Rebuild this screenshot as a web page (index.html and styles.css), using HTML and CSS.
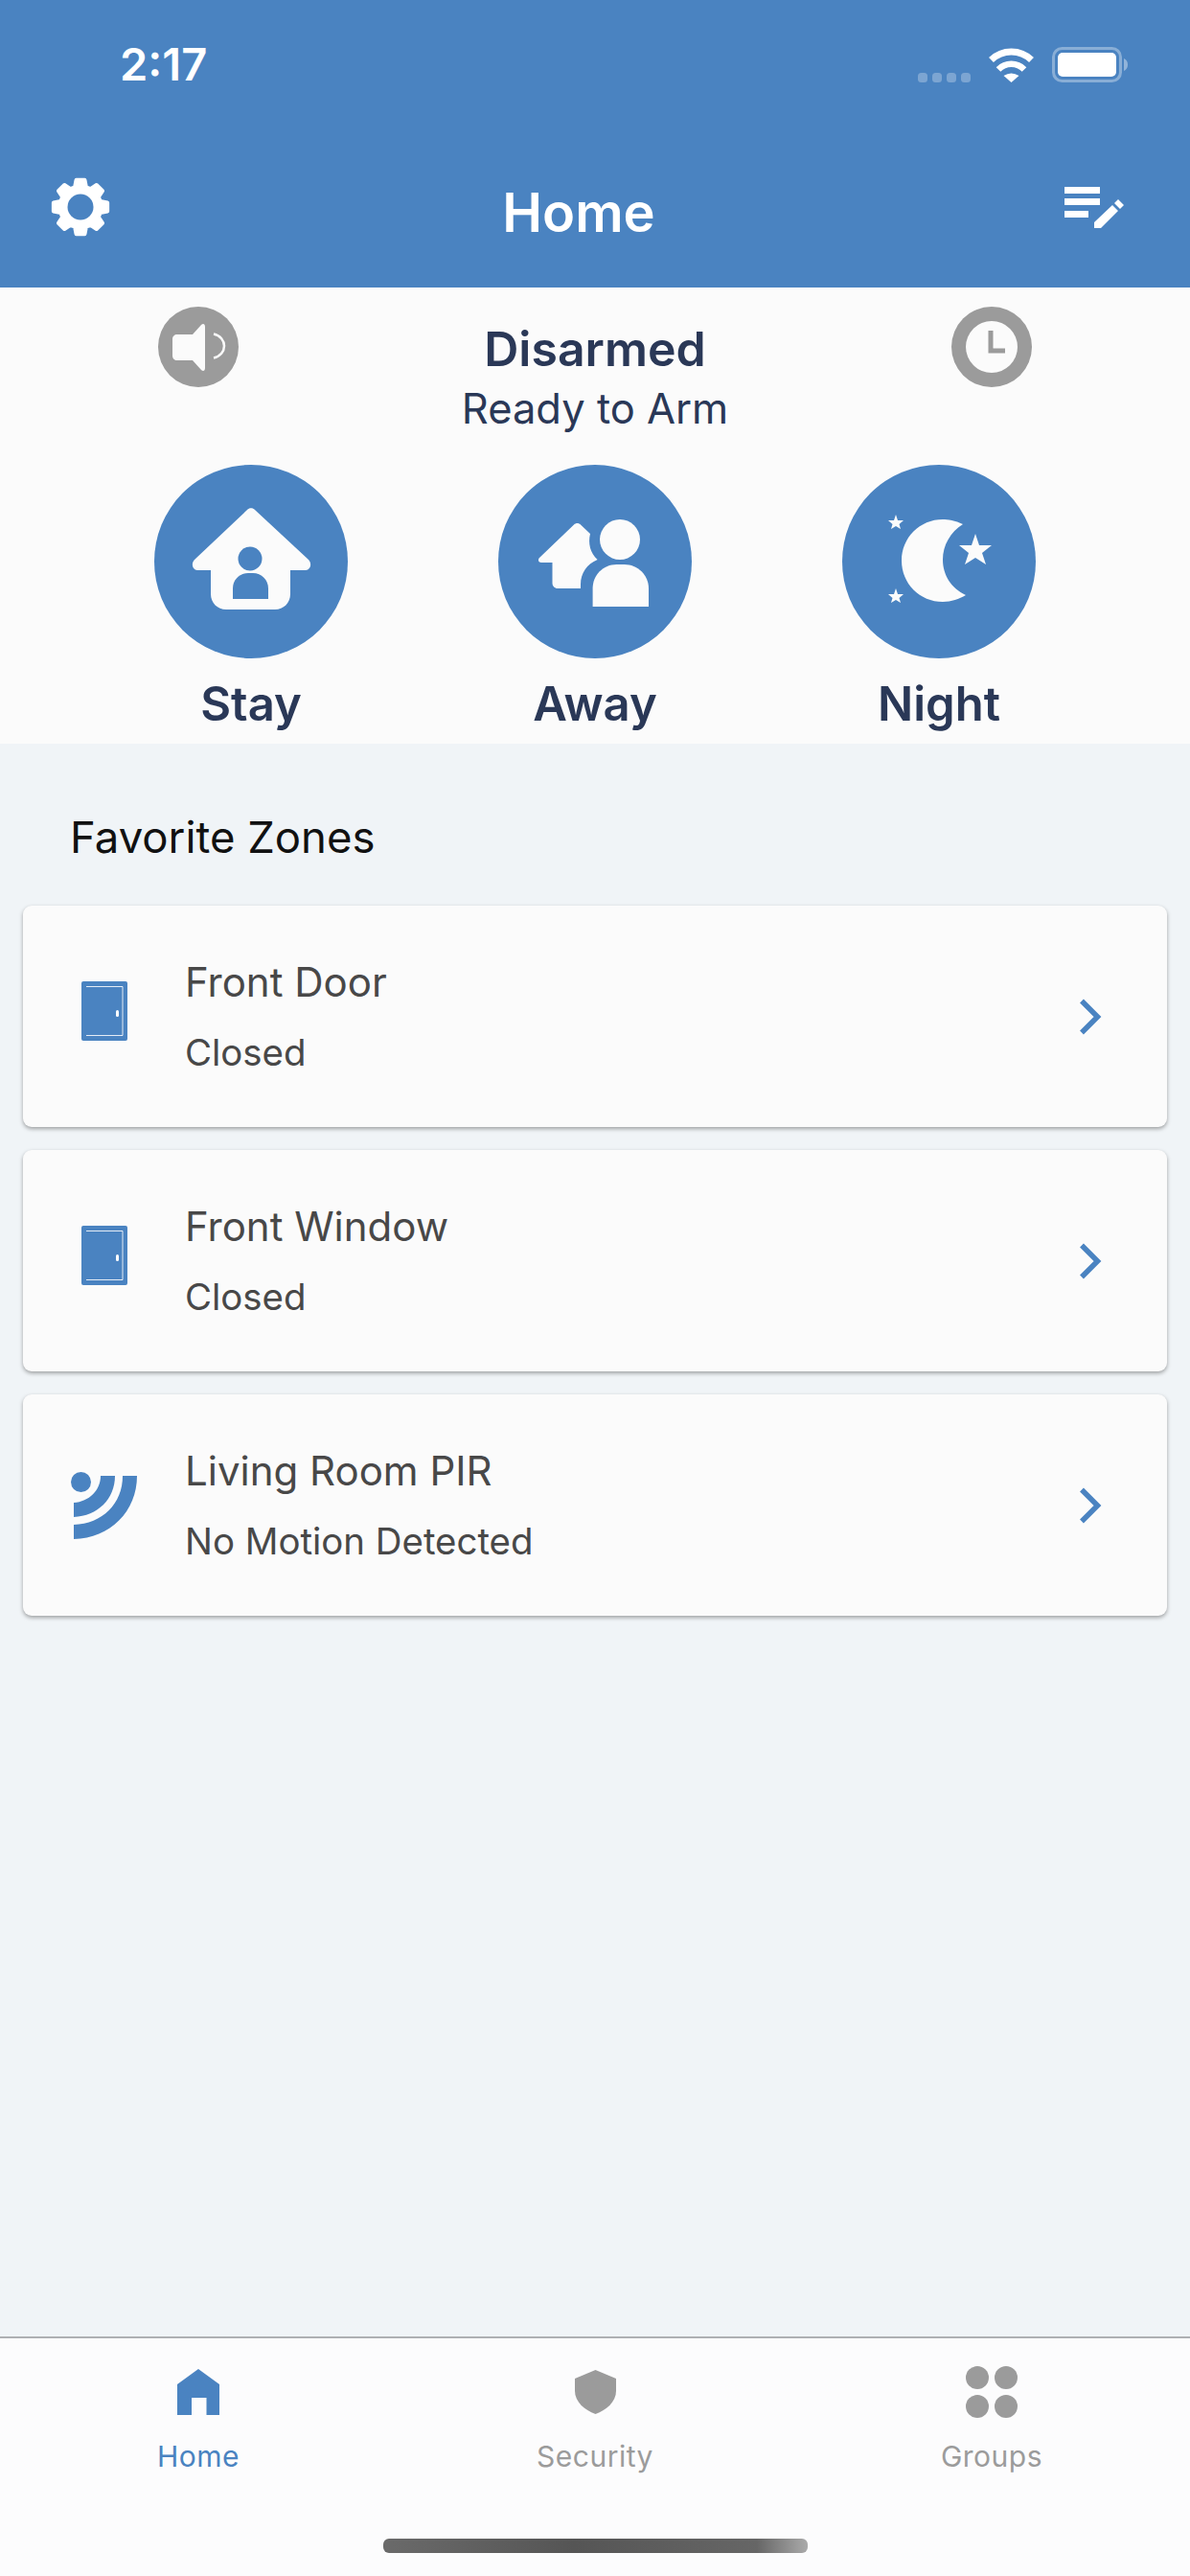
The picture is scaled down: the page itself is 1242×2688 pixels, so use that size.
FILE: index.html
```html
<!DOCTYPE html>
<html lang="en">
<head>
    <meta charset="UTF-8">
    <meta name="viewport" content="width=device-width, initial-scale=1.0">
    <title>Home</title>
    <link rel="stylesheet" href="styles.css">
</head>
<body>
<div class="app">
    <!-- Header -->
    <div class="header">
        <div class="status-bar">
            <span class="time">2:17</span>
            <div class="status-icons">
                <svg class="signal" width="55" height="10" viewBox="0 0 55 10"><rect x="0" y="0" width="10" height="10" rx="3.5"/><rect x="15" y="0" width="10" height="10" rx="3.5"/><rect x="30" y="0" width="10" height="10" rx="3.5"/><rect x="45" y="0" width="10" height="10" rx="3.5"/></svg>
                <svg width="47" height="36" viewBox="0 0 47 36"><path fill="#fff" d="M15.5 29Q23.5 24 31.5 29L23.5 36z"/><path fill="none" stroke="#fff" stroke-width="6.5" d="M10 22.5A19 19 0 0 1 37 22.5"/><path fill="none" stroke="#fff" stroke-width="7" d="M2.5 12.5A30 30 0 0 1 44.5 12.5"/></svg>
                <svg width="79" height="37" viewBox="0 0 79 37"><rect x="1.5" y="1.5" width="70" height="34" rx="9" fill="none" stroke="#fff" stroke-opacity=".35" stroke-width="3"/><rect x="6" y="6" width="61" height="25" rx="5" fill="#fff"/><path d="M75 12c2.5 1 4 3.5 4 6.5s-1.5 5.5-4 6.5z" fill="#fff" fill-opacity=".4"/></svg>
            </div>
        </div>
        <div class="nav-bar">
            <svg width="62" height="62" viewBox="-31 -31 62 62"><polygon fill="#fff" stroke="#fff" stroke-width="4" stroke-linejoin="round" points="-4.46,-28.15 4.46,-28.15 5.93,-20.67 10.42,-18.81 16.75,-23.06 23.06,-16.75 18.81,-10.42 20.67,-5.93 28.15,-4.46 28.15,4.46 20.67,5.93 18.81,10.42 23.06,16.75 16.75,23.06 10.42,18.81 5.93,20.67 4.46,28.15 -4.46,28.15 -5.93,20.67 -10.42,18.81 -16.75,23.06 -23.06,16.75 -18.81,10.42 -20.67,5.93 -28.15,4.46 -28.15,-4.46 -20.67,-5.93 -18.81,-10.42 -23.06,-16.75 -16.75,-23.06 -10.42,-18.81 -5.93,-20.67"/><circle r="13.5" fill="#4a83c1"/></svg>
            <h1 class="title">Home</h1>
            <svg width="62" height="45" viewBox="0 0 62 45"><path fill="#fff" d="M0 1h37v7H0zM0 13h37v7H0zM0 26h25v7H0z"/><path fill="#fff" d="M31 38L50 20l6 6-18 18h-7zM56 14l6 6-4 4-6-6z"/></svg>
        </div>
    </div>

    <!-- Arm panel -->
    <div class="arm-panel">
        <div class="arm-status">
            <div class="round-btn">
                <svg width="84" height="84" viewBox="0 0 84 84"><circle cx="42" cy="42" r="42" fill="#9b9b9b"/><path fill="#fbfbfb" d="M15 34c0-3 2-5 5-5H36l9-10c2-2 4-1 4 2V64c0 3-2 4-4 2L36 56H20c-3 0-5-2-5-5z"/><path fill="none" stroke="#fbfbfb" stroke-width="2.5" d="M58 28.5c7 1.5 11 7 11 12.500s-4 11-11 12.500"/></svg>
            </div>
            <div class="status-text">
                <div class="status-main">Disarmed</div>
                <div class="status-sub">Ready to Arm</div>
            </div>
            <div class="round-btn">
                <svg width="84" height="84" viewBox="0 0 84 84"><circle cx="42" cy="42" r="42" fill="#9b9b9b"/><circle cx="42" cy="42" r="27" fill="#fbfbfb"/><path fill="none" stroke="#9b9b9b" stroke-width="5" d="M41 25v21h15"/></svg>
            </div>
        </div>
        <div class="arm-modes">
            <div class="mode">
                <svg width="202" height="202" viewBox="0 0 202 202"><circle cx="101" cy="101" r="101" fill="#4a83c1"/><path fill="#fbfbfb" d="M97 47c2-2.5 6-2.5 8 0L161 99c4 4 2 11-3 11H142v25c0 9-7 16-16 16H75c-9 0-16-7-16-16V110H45c-5 0-7-7-3-11z"/><circle cx="100" cy="98" r="12.5" fill="#4a83c1"/><path fill="#4a83c1" d="M82 140V129c0-9 7-16 16-16h5c9 0 16 7 16 16v11z"/></svg>
                <span class="mode-label">Stay</span>
            </div>
            <div class="mode">
                <svg width="202" height="202" viewBox="0 0 202 202"><circle cx="101" cy="101" r="101" fill="#4a83c1"/><path fill="#fbfbfb" d="M79 62.5c2-2 5-2 7 0L96 72c-2.5 10 0 20 7.6 27c-11 4.5-17.6 14-17.6 26v4H62c-3 0-5.5-2.5-5.5-5.5V102H45c-3 0-4-3-2-5z"/><circle cx="127" cy="78" r="21" fill="#fbfbfb"/><path fill="#fbfbfb" d="M98.6 148V129c0-14 11-25 25-25h8c14 0 25.4 11 25.4 25v19z"/></svg>
                <span class="mode-label">Away</span>
            </div>
            <div class="mode">
                <svg width="202" height="202" viewBox="0 0 202 202"><circle cx="101" cy="101" r="101" fill="#4a83c1"/><path fill="#fbfbfb" d="M126 62C118 58 110 57 105 57C81 57 62 76 62 100C62 124 81 143 105 143C114 143 122 140 129 136C114 129 105 115 105 99C105 84 113 70 126 62z"/><polygon fill="#fbfbfb" points="139,72 143,84 156,84 146,92 150,104 139,97 128,104 132,92 122,84 135,84"/><polygon fill="#fbfbfb" points="56,52 58,58 64,58 59.5,62 61,67 56,64 51,67 52.5,62 48,58 54,58"/><polygon fill="#fbfbfb" points="56,129 58,135 64,135 59.5,139 61,144 56,141 51,144 52.5,139 48,135 54,135"/></svg>
                <span class="mode-label">Night</span>
            </div>
        </div>
    </div>

    <!-- Zones -->
    <div class="zones">
        <h2 class="zones-title">Favorite Zones</h2>
        <div class="zone-card">
            <div class="zone-icon door">
                <svg width="48" height="62" viewBox="0 0 48 62"><rect width="48" height="62" rx="2" fill="#4a83c1"/><path fill="none" stroke="#fff" stroke-width="1" stroke-opacity=".85" d="M5 5.5h38v51H5"/><rect x="36" y="30" width="3" height="7" rx="1.5" fill="#fff"/></svg>
            </div>
            <div class="zone-text">
                <div class="zone-name">Front Door</div>
                <div class="zone-state">Closed</div>
            </div>
            <svg width="28" height="40" viewBox="0 0 28 40"><path fill="none" stroke="#4a83c1" stroke-width="5.5" d="M5 3.5L21.5 20L5 36.5"/></svg>
        </div>
        <div class="zone-card">
            <div class="zone-icon door">
                <svg width="48" height="62" viewBox="0 0 48 62"><rect width="48" height="62" rx="2" fill="#4a83c1"/><path fill="none" stroke="#fff" stroke-width="1" stroke-opacity=".85" d="M5 5.5h38v51H5"/><rect x="36" y="30" width="3" height="7" rx="1.5" fill="#fff"/></svg>
            </div>
            <div class="zone-text">
                <div class="zone-name">Front Window</div>
                <div class="zone-state">Closed</div>
            </div>
            <svg width="28" height="40" viewBox="0 0 28 40"><path fill="none" stroke="#4a83c1" stroke-width="5.5" d="M5 3.5L21.5 20L5 36.5"/></svg>
        </div>
        <div class="zone-card">
            <div class="zone-icon">
                <svg width="70" height="70" viewBox="0 0 70 70"><circle cx="10.5" cy="10.5" r="10.5" fill="#4a83c1"/><path fill="#4a83c1" d="M31 4H46C46 28 28 46 3 47V32C19 31 31 19 31 4z"/><path fill="#4a83c1" d="M54 4H69C69 41 41 69 3 70V55C33 54 54 33 54 4z"/></svg>
            </div>
            <div class="zone-text">
                <div class="zone-name">Living Room PIR</div>
                <div class="zone-state">No Motion Detected</div>
            </div>
            <svg width="28" height="40" viewBox="0 0 28 40"><path fill="none" stroke="#4a83c1" stroke-width="5.5" d="M5 3.5L21.5 20L5 36.5"/></svg>
        </div>
    </div>

    <!-- Tab bar -->
    <div class="tabbar">
        <div class="tabs">
            <div class="tab active">
                <div class="tab-icon"><svg width="44" height="48" viewBox="0 0 44 48"><path fill="#4a83c1" d="M22 0L44 16V48H30.5V30H15V48H0V16z"/></svg></div>
                <span>Home</span>
            </div>
            <div class="tab">
                <div class="tab-icon"><svg width="43" height="46" viewBox="0 0 43 46"><path fill="#9b9b9b" d="M21.5 0L43 9V22C43 33 33 42 21.5 46C10 42 0 33 0 22V9z"/></svg></div>
                <span>Security</span>
            </div>
            <div class="tab">
                <div class="tab-icon"><svg width="54" height="54" viewBox="0 0 54 54"><circle cx="12" cy="12" r="12" fill="#9b9b9b"/><circle cx="42" cy="12" r="12" fill="#9b9b9b"/><circle cx="12" cy="42" r="12" fill="#9b9b9b"/><circle cx="42" cy="42" r="12" fill="#9b9b9b"/></svg></div>
                <span>Groups</span>
            </div>
        </div>
        <div class="home-indicator"></div>
    </div>
</div>
</body>
</html>
```

FILE: styles.css
```css
* {
    box-sizing: border-box;
}
body {
    margin: 0;
    font-family: 'Inter', 'Roboto', sans-serif;
    background-color: #f0f4f7;
}
.app {
    width: 1242px;
    height: 2688px;
    display: flex;
    flex-direction: column;
    overflow: hidden;
}

/* Header */
.header {
    height: 300px;
    background-color: #4a83c1;
    color: white;
}
.status-bar {
    height: 162px;
    padding: 47px 65px 0 125px;
    display: flex;
    justify-content: space-between;
    align-items: flex-start;
}
.time {
    font-size: 47px;
    line-height: 40px;
    font-weight: 600;
}
.status-icons {
    display: flex;
    align-items: flex-end;
    gap: 19px;
    height: 37px;
    margin-top: 2px;
}
.signal {
    fill: rgba(255, 255, 255, 0.28);
}
.nav-bar {
    display: flex;
    align-items: center;
    justify-content: space-between;
    height: 108px;
    padding: 0 69px 0 53px;
}
.title {
    margin: 12px 18px 0 0;
    font-size: 56px;
    font-weight: 600;
    line-height: 70px;
}

/* Arm panel */
.arm-panel {
    height: 476px;
    background-color: #fbfbfb;
    color: #2a3857;
}
.arm-status {
    display: flex;
    justify-content: space-between;
    padding: 20px 165px 0;
    height: 185px;
}
.round-btn {
    height: 84px;
}
.status-text {
    text-align: center;
}
.status-main {
    font-size: 50px;
    font-weight: 600;
    line-height: 60px;
    margin-top: 14px;
}
.status-sub {
    font-size: 43.5px;
    line-height: 52px;
    margin-top: 6px;
}
.arm-modes {
    display: flex;
    justify-content: space-between;
    padding: 0 161px;
}
.mode {
    display: flex;
    flex-direction: column;
    align-items: center;
    width: 202px;
}
.mode-label {
    font-size: 49px;
    font-weight: 600;
    line-height: 60px;
    margin-top: 18px;
}

/* Zones */
.zones {
    flex: 1;
    padding: 0 24px;
}
.zones-title {
    margin: 0;
    padding: 68px 0 0 49px;
    height: 169px;
    font-size: 45.5px;
    line-height: 60px;
    font-weight: 400;
    color: #111;
}
.zone-card {
    display: flex;
    align-items: center;
    height: 231px;
    margin-bottom: 24px;
    background-color: #fbfbfb;
    border-radius: 9px;
    box-shadow: 0 2px 4px rgba(0, 0, 0, 0.35);
    padding: 0 66px 0 50px;
}
.zone-icon {
    width: 70px;
    margin-right: 49px;
    display: flex;
    justify-content: center;
}
.zone-icon.door {
    margin-bottom: 11px;
}
.zone-text {
    flex: 1;
    color: #484848;
}
.zone-name {
    font-size: 42px;
    line-height: 50px;
    margin-top: 2px;
}
.zone-state {
    font-size: 38.4px;
    line-height: 50px;
    margin-top: 23px;
}

/* Tab bar */
.tabbar {
    height: 250px;
    background-color: #fcfcfd;
    border-top: 2px solid #aeb0b3;
    display: flex;
    flex-direction: column;
    align-items: center;
}
.tabs {
    display: flex;
    width: 100%;
    height: 209px;
    padding-top: 29px;
}
.tab {
    flex: 1;
    display: flex;
    flex-direction: column;
    align-items: center;
    color: #9b9b9b;
    font-size: 30px;
    letter-spacing: 0.5px;
}
.tab-icon {
    height: 54px;
    display: flex;
    align-items: center;
}
.tab span {
    margin-top: 22px;
    line-height: 36px;
}
.tab.active {
    color: #4a83c1;
}
.home-indicator {
    width: 443px;
    height: 15px;
    border-radius: 6px;
    background: linear-gradient(90deg, #6a6a6a 0%, #555 45%, #666 88%, #aaa 100%);
}
```
